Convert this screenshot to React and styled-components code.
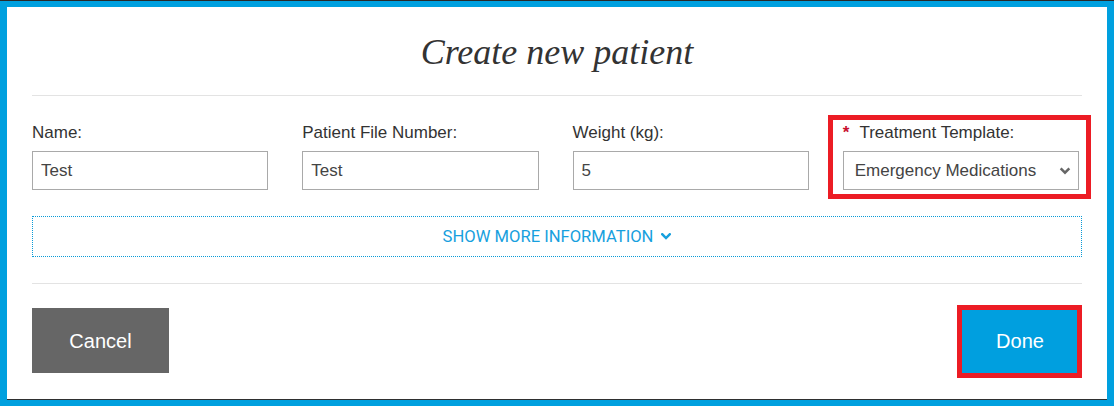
import React from "react";
import styled, { createGlobalStyle } from "styled-components";

const GlobalStyle = createGlobalStyle`
  html, body {
    margin: 0;
    padding: 0;
    background: #00a0df;
  }
  * {
    box-sizing: border-box;
  }
`;

const Backdrop = styled.div`
  border-top: 1px solid #2a2a2a;
  padding: 6px 7px 7px;
  font-family: "Liberation Sans", Arial, sans-serif;
`;

const Modal = styled.div`
  background: #ffffff;
  height: 392px;
  padding: 0 25px;
  box-shadow: 0 1px 0 #2f2f2f;
`;

const Header = styled.div`
  height: 89px;
  display: flex;
  align-items: center;
  justify-content: center;
  border-bottom: 1px solid #e3e3e3;
`;

const Title = styled.h2`
  margin: 0;
  font-family: "Liberation Serif", "Times New Roman", serif;
  font-style: italic;
  font-weight: normal;
  font-size: 36px;
  color: #333333;
  padding-top: 2px;
`;

const Fields = styled.div`
  display: grid;
  grid-template-columns: repeat(4, 1fr);
  column-gap: 34px;
  margin: 27px 3px 0 0;
`;

const Field = styled.div`
  position: relative;
  display: flex;
  flex-direction: column;

  ${({ $highlight }) =>
    $highlight &&
    `
    &::after {
      content: "";
      position: absolute;
      top: -8px;
      left: -15px;
      right: -12px;
      bottom: -9px;
      border: 5px solid #ec1c24;
      pointer-events: none;
    }
  `}
`;

const Label = styled.label`
  font-size: 17px;
  line-height: 20px;
  color: #333333;
  margin-bottom: 8px;
  white-space: nowrap;
`;

const Required = styled.span`
  color: #c8102e;
  font-weight: bold;
  margin-right: 10px;
`;

const Input = styled.input`
  height: 39px;
  width: 100%;
  border: 1px solid #a9a9a9;
  border-radius: 0;
  padding: 0 8px;
  font-family: "Liberation Sans", Arial, sans-serif;
  font-size: 17px;
  color: #444444;
  outline: none;
`;

const SelectWrap = styled.div`
  position: relative;
  height: 39px;
`;

const Select = styled.select`
  appearance: none;
  -webkit-appearance: none;
  height: 39px;
  width: 100%;
  border: 1px solid #a9a9a9;
  border-radius: 0;
  background: #ffffff;
  padding: 0 30px 0 11px;
  font-family: "Liberation Sans", Arial, sans-serif;
  font-size: 17px;
  color: #444444;
  outline: none;
`;

const SelectArrow = styled.svg`
  position: absolute;
  right: 8px;
  top: 16px;
  pointer-events: none;
`;

const ShowMore = styled.button`
  display: flex;
  align-items: center;
  justify-content: center;
  gap: 8px;
  width: 100%;
  height: 41px;
  margin-top: 26px;
  background: #ffffff;
  border: 1px dotted #0a9ad6;
  color: #17a0de;
  font-family: Roboto, "Noto Sans", sans-serif;
  font-size: 16.6px;
  text-transform: uppercase;
  cursor: pointer;
`;

const Divider = styled.hr`
  border: none;
  border-top: 1px solid #e3e3e3;
  margin: 26px 0 0;
`;

const Footer = styled.div`
  display: flex;
  justify-content: space-between;
  align-items: center;
  padding-top: 24px;
`;

const Button = styled.button`
  position: relative;
  height: 65px;
  width: ${({ $w }) => $w}px;
  border: none;
  border-radius: 0;
  background: ${({ $primary }) => ($primary ? "#009fdf" : "#666666")};
  color: #ffffff;
  font-family: "Liberation Sans", Arial, sans-serif;
  font-size: 20px;
  padding-top: 2px;
  cursor: pointer;
  margin-right: ${({ $primary }) => ($primary ? "2px" : "0")};

  ${({ $highlight }) =>
    $highlight &&
    `
    &::after {
      content: "";
      position: absolute;
      top: -3px;
      left: -3px;
      right: -2px;
      bottom: -5px;
      border: 5px solid #ec1c24;
      pointer-events: none;
    }
  `}
`;

const Chevron = ({ color, w, h, sw }) => (
  <svg width={w} height={h} viewBox="0 0 10 7">
    <polyline
      points="1.2,1.2 5,5 8.8,1.2"
      fill="none"
      stroke={color}
      strokeWidth={sw}
      strokeLinecap="square"
    />
  </svg>
);

export default function App() {
  return (
    <>
      <GlobalStyle />
      <Backdrop>
        <Modal>
          <Header>
            <Title>Create new patient</Title>
          </Header>

          <Fields>
            <Field>
              <Label>Name:</Label>
              <Input defaultValue="Test" />
            </Field>
            <Field>
              <Label>Patient File Number:</Label>
              <Input defaultValue="Test" />
            </Field>
            <Field>
              <Label>Weight (kg):</Label>
              <Input defaultValue="5" />
            </Field>
            <Field $highlight>
              <Label>
                <Required>*</Required>Treatment Template:
              </Label>
              <SelectWrap>
                <Select defaultValue="em">
                  <option value="em">Emergency Medications</option>
                </Select>
                <SelectArrow width="12" height="8" viewBox="0 0 10 7">
                  <polyline
                    points="1.2,1.2 5,5 8.8,1.2"
                    fill="none"
                    stroke="#666666"
                    strokeWidth="2.2"
                  />
                </SelectArrow>
              </SelectWrap>
            </Field>
          </Fields>

          <ShowMore>
            Show more information
            <Chevron color="#17a0de" w={10} h={7} sw={2.4} />
          </ShowMore>

          <Divider />

          <Footer>
            <Button $w={137}>Cancel</Button>
            <Button $w={120} $primary $highlight>
              Done
            </Button>
          </Footer>
        </Modal>
      </Backdrop>
    </>
  );
}
